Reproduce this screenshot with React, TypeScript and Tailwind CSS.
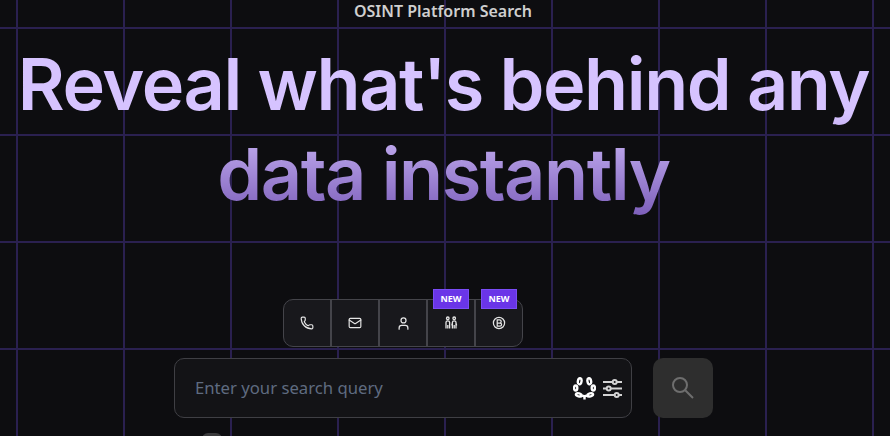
import { Mail, Phone, User } from 'lucide-react';

function FamilyIcon() {
  return (
    <svg width="14" height="14" viewBox="0 0 14 14" fill="none" stroke="currentColor" strokeWidth="1.3">
      <circle cx="3.8" cy="2.3" r="1.3" />
      <circle cx="10.2" cy="2.3" r="1.3" />
      <path d="M2 12.5V6.2q0-1.3 1.8-1.3t1.8 1.3v6.3M3.8 9v3.5" />
      <path d="M8.4 12.5V6.2q0-1.3 1.8-1.3T12 6.2v6.3M10.2 9v3.5M7.8 9.5l.6-2.5M12.6 9.5L12 7" />
    </svg>
  );
}

function BitcoinIcon() {
  return (
    <svg width="14" height="14" viewBox="0 0 14 14" fill="none" stroke="currentColor" strokeWidth="1.25">
      <circle cx="7" cy="7" r="5.6" />
      <path d="M5.2 3.8h2.4a1.5 1.5 0 0 1 0 3.2H5.2h2.8a1.5 1.5 0 0 1 0 3.2H5.2V3.8z" />
    </svg>
  );
}

function WreathIcon() {
  return (
    <svg width="23" height="23" viewBox="0 0 24 24" fill="none" stroke="#fff" strokeWidth="2.5">
      <ellipse cx="7" cy="4.5" rx="1.9" ry="3.2" transform="rotate(10 7 4.5)" />
      <ellipse cx="17" cy="4.5" rx="1.9" ry="3.2" transform="rotate(-10 17 4.5)" />
      <ellipse cx="2.8" cy="11.5" rx="1.7" ry="2.6" />
      <ellipse cx="21.2" cy="11.5" rx="1.7" ry="2.6" />
      <ellipse cx="6" cy="18.6" rx="3" ry="1.6" transform="rotate(15 6 18.6)" />
      <ellipse cx="18" cy="18.6" rx="3" ry="1.6" transform="rotate(-15 18 18.6)" />
      <path d="M9.5 19.500q2.500 1 5 0M12 20v3.500" />
    </svg>
  );
}

function SlidersIcon() {
  return (
    <svg width="19" height="19" viewBox="0 0 19 19" fill="none" stroke="#d4d4d4" strokeWidth="2">
      <path d="M0 3h9.500M14 3h5M0 9.500h3.500M8 9.500h11M0 16h11M16 16h3" />
      <circle cx="11.700" cy="3" r="2" />
      <circle cx="5.700" cy="9.500" r="2" />
      <circle cx="13.700" cy="16" r="2" />
    </svg>
  );
}

function SearchIcon() {
  return (
    <svg width="22" height="22" viewBox="0 0 22 22" fill="none" stroke="currentColor" strokeWidth="2">
      <circle cx="8" cy="8" r="7" />
      <path d="M13.200 13.200L21 21" />
    </svg>
  );
}

const tabs = [
  { icon: <Phone size={14} strokeWidth={2} /> },
  { icon: <Mail size={14} strokeWidth={2} /> },
  { icon: <User size={15} strokeWidth={2} /> },
  { icon: <FamilyIcon />, isNew: true },
  { icon: <BitcoinIcon />, isNew: true },
];

export default function App() {
  return (
    <div className="h-[436px] w-[890px] overflow-hidden bg-[#0d0d10] bg-[linear-gradient(to_right,#2a2050_2px,transparent_2px),linear-gradient(to_bottom,#2a2050_2px,transparent_2px)] bg-size-[107px_107px] bg-position-[16px_27px] font-['Noto_Sans',sans-serif]">
      <p className="pr-[4px] text-center text-[16px] leading-[22px] font-semibold text-[#cfcfcf]">OSINT Platform Search</p>
      <h1 className="mt-[17px] bg-[linear-gradient(to_bottom,#d6c3ff_41%,#7a5cb8_100%)] bg-clip-text pr-[3px] text-center font-['Inter',sans-serif] text-[72px] leading-[90px] font-semibold tracking-[-1.44px] text-transparent">
        Reveal what's behind any
        <br />
        data instantly
      </h1>

      <div className="mt-[80px] ml-[283px] flex h-[48px] w-[240px] rounded-[10px] border border-[#44444a] bg-[#18181c]">
        {tabs.map((tab, i) => (
          <button
            key={i}
            className={`relative flex flex-1 items-center justify-center text-[#e5e5e5] ${i > 0 ? 'border-l-2 border-[#44444a]' : ''}`}
          >
            {tab.icon}
            {tab.isNew && (
              <span className="absolute top-[-11px] left-[5px] flex h-[20px] w-[36px] items-center justify-center border border-[#7a4cf5] bg-[#6a35e8] text-[9px] font-bold text-white">
                NEW
              </span>
            )}
          </button>
        ))}
      </div>

      <div className="mt-[11px] ml-[174px] flex gap-[21px]">
        <div className="flex h-[60px] w-[458px] items-center rounded-[10px] border border-[#3f3f44] bg-[#131316] pr-[9px] pl-[20px]">
          <input
            placeholder="Enter your search query"
            className="min-w-0 flex-1 bg-transparent text-[16.7px] text-white outline-none placeholder:text-[#5f6b80]"
          />
          <div className="flex items-center gap-[7px]">
            <WreathIcon />
            <SlidersIcon />
          </div>
        </div>
        <button className="flex h-[60px] w-[60px] items-center justify-center rounded-[10px] bg-[#2e2e2e] text-[#6e6e6e]">
          <SearchIcon />
        </button>
      </div>

      <div className="mt-[15px] ml-[202px] h-[20px] w-[20px] rounded-[6px] bg-[#3a3a3c]" />
    </div>
  );
}
